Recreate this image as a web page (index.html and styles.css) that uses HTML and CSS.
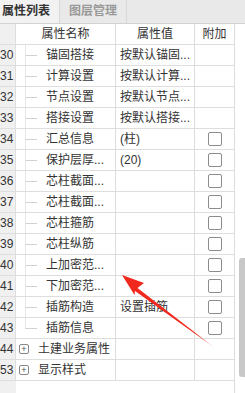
FILE: index.html
```html
<!DOCTYPE html>
<html>
  <head>
    <meta charset="utf-8">
    <link rel="stylesheet" href="styles.css">
  </head>
  <body>
    <div class="tabs">
      <div class="tab active">属性列表</div>
      <div class="tab">图层管理</div>
    </div>
    <div class="panel">
      <div class="grid">
        <div class="row head">
          <div class="num"></div>
          <div class="cell center">属性名称</div>
          <div class="cell center">属性值</div>
          <div class="cell center">附加</div>
        </div>
        <div class="row"><div class="num">30</div><div class="cell name"><span class="branch"></span>锚固搭接</div><div class="cell val">按默认锚固...</div><div class="cell chk"></div></div>
        <div class="row"><div class="num">31</div><div class="cell name"><span class="branch"></span>计算设置</div><div class="cell val">按默认计算...</div><div class="cell chk"></div></div>
        <div class="row"><div class="num">32</div><div class="cell name"><span class="branch"></span>节点设置</div><div class="cell val">按默认节点...</div><div class="cell chk"></div></div>
        <div class="row"><div class="num">33</div><div class="cell name"><span class="branch"></span>搭接设置</div><div class="cell val">按默认搭接...</div><div class="cell chk"></div></div>
        <div class="row"><div class="num">34</div><div class="cell name"><span class="branch"></span>汇总信息</div><div class="cell val">(柱)</div><div class="cell chk"><span class="box"></span></div></div>
        <div class="row"><div class="num">35</div><div class="cell name"><span class="branch"></span>保护层厚...</div><div class="cell val">(20)</div><div class="cell chk"><span class="box"></span></div></div>
        <div class="row"><div class="num">36</div><div class="cell name"><span class="branch"></span>芯柱截面...</div><div class="cell val"></div><div class="cell chk"><span class="box"></span></div></div>
        <div class="row"><div class="num">37</div><div class="cell name"><span class="branch"></span>芯柱截面...</div><div class="cell val"></div><div class="cell chk"><span class="box"></span></div></div>
        <div class="row"><div class="num">38</div><div class="cell name"><span class="branch"></span>芯柱箍筋</div><div class="cell val"></div><div class="cell chk"><span class="box"></span></div></div>
        <div class="row"><div class="num">39</div><div class="cell name"><span class="branch"></span>芯柱纵筋</div><div class="cell val"></div><div class="cell chk"><span class="box"></span></div></div>
        <div class="row"><div class="num">40</div><div class="cell name"><span class="branch"></span>上加密范...</div><div class="cell val"></div><div class="cell chk"><span class="box"></span></div></div>
        <div class="row"><div class="num">41</div><div class="cell name"><span class="branch"></span>下加密范...</div><div class="cell val"></div><div class="cell chk"><span class="box"></span></div></div>
        <div class="row"><div class="num">42</div><div class="cell name"><span class="branch"></span>插筋构造</div><div class="cell val">设置插筋</div><div class="cell chk"><span class="box"></span></div></div>
        <div class="row"><div class="num">43</div><div class="cell name"><span class="branch last"></span>插筋信息</div><div class="cell val"></div><div class="cell chk"><span class="box"></span></div></div>
        <div class="row"><div class="num">44</div><div class="cell group"><span class="plus">+</span>土建业务属性</div><div class="cell val"></div><div class="cell chk"></div></div>
        <div class="row"><div class="num">53</div><div class="cell group"><span class="plus">+</span>显示样式</div><div class="cell val"></div><div class="cell chk"></div></div>
        <div class="row rest"><div class="num"></div></div>
      </div>
      <div class="scroll">
        <div class="thumb"></div>
      </div>
    </div>
    <svg class="arrow" width="245" height="393" viewBox="0 0 245 393">
      <defs>
        <linearGradient id="fade" x1="123" y1="276" x2="215" y2="348" gradientUnits="userSpaceOnUse">
          <stop offset="0" stop-color="#f0281e"/>
          <stop offset="0.8" stop-color="#f0281e"/>
          <stop offset="1" stop-color="#f0281e" stop-opacity="0.2"/>
        </linearGradient>
      </defs>
      <polygon points="122,275 144,283 137.5,288 215,348 135,291 134.5,295" fill="url(#fade)"/>
    </svg>
  </body>
</html>
```

FILE: styles.css
```css
body {
  margin: 0;
  width: 245px;
  height: 393px;
  overflow: hidden;
  background: #fff;
  font-family: "Liberation Sans", "Noto Sans CJK SC", sans-serif;
  font-size: 12px;
  color: #333;
  position: relative;
}

.tabs {
  display: flex;
  height: 23px;
  background: #e9e9e9;
  border-bottom: 1px solid #d2d2d2;
}

.tab {
  width: 57px;
  line-height: 23px;
  padding-left: 9px;
  color: #999;
  font-weight: bold;
  border-right: 1px solid #d8d8d8;
}

.tab.active {
  padding-left: 2px;
  background: #f2f2f2;
  color: #333;
}

.panel {
  display: flex;
}

.grid {
  width: 235px;
  border-right: 1px solid #dcdcdc;
  box-sizing: border-box;
}

.row {
  display: grid;
  grid-template-columns: 16px 100px 79px 39px;
  height: 21px;
}

.row > div {
  border-bottom: 1px solid #dedede;
  border-right: 1px solid #dedede;
  line-height: 20px;
  white-space: nowrap;
  overflow: hidden;
}

.row > div:last-child {
  border-right: none;
}

.num {
  background: #f0f0f0;
  text-align: right;
  padding-right: 2px;
  color: #333;
}

.row.rest {
  height: 12px;
}

.row.rest > div {
  border-bottom: none;
}

.center {
  text-align: center;
}

.name {
  position: relative;
  padding-left: 30px;
}

.branch {
  position: absolute;
  left: 9px;
  top: 0;
  width: 11px;
  height: 10px;
  border-left: 1px solid #e6e6e6;
  border-bottom: 1px solid #d2d2d2;
}

.branch::after {
  content: "";
  position: absolute;
  left: -1px;
  top: 11px;
  height: 11px;
  border-left: 1px solid #e6e6e6;
}

.branch.last::after {
  display: none;
}

.val {
  padding-left: 4px;
}

.chk {
  display: flex;
  align-items: center;
  justify-content: center;
}

.box {
  width: 12px;
  height: 12px;
  border: 1px solid #8c8c8c;
  border-radius: 2px;
  background: #fff;
}

.group {
  display: flex;
  align-items: center;
  padding-left: 3px;
}

.plus {
  width: 8px;
  height: 8px;
  border: 1px solid #888;
  border-radius: 2px;
  margin-right: 9px;
  font-size: 9px;
  line-height: 8px;
  text-align: center;
  color: #555;
}

.scroll {
  flex: 1;
  display: flex;
  justify-content: flex-end;
}

.thumb {
  width: 7px;
  height: 119px;
  margin-top: 234px;
  margin-right: -1px;
  background: #c8c8c8;
  border-radius: 3px 0 0 3px;
}

.arrow {
  position: absolute;
  left: 0;
  top: 0;
  pointer-events: none;
}
```
